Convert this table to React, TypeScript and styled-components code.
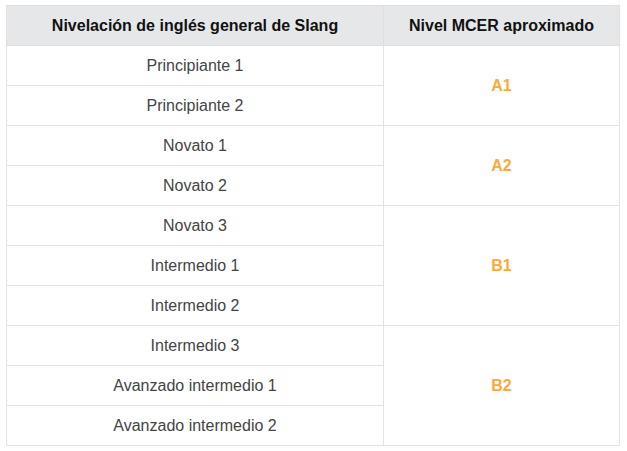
import React from "react";
import styled, { createGlobalStyle } from "styled-components";

const GlobalStyle = createGlobalStyle`
  html, body {
    margin: 0;
    padding: 0;
    background: #ffffff;
  }
  body {
    font-family: "Liberation Sans", Arial, sans-serif;
  }
`;

const Wrapper = styled.div`
  padding: 5px 10px 0 6px;
`;

const Table = styled.table`
  width: 611px;
  border-collapse: collapse;
  table-layout: fixed;
`;

const HeadCell = styled.th<{ $w: number }>`
  width: ${(p) => p.$w}px;
  height: 39px;
  padding: 0;
  background: #e6e7e9;
  border: 1px solid #dfdfdf;
  color: #111111;
  font-size: 16px;
  font-weight: 700;
  text-align: center;
  vertical-align: middle;
`;

const Cell = styled.td`
  height: 39px;
  padding: 0;
  border: 1px solid #e3e3e3;
  color: #444444;
  font-size: 16px;
  text-align: center;
  vertical-align: middle;
`;

const LevelCell = styled(Cell)`
  color: #fbaa3a;
  font-weight: 700;
`;

const groups = [
  { level: "A1", rows: ["Principiante 1", "Principiante 2"] },
  { level: "A2", rows: ["Novato 1", "Novato 2"] },
  { level: "B1", rows: ["Novato 3", "Intermedio 1", "Intermedio 2"] },
  { level: "B2", rows: ["Intermedio 3", "Avanzado intermedio 1", "Avanzado intermedio 2"] },
];

const App = (): JSX.Element => {
  return (
    <>
      <GlobalStyle />
      <Wrapper>
        <Table>
          <thead>
            <tr>
              <HeadCell $w={376}>Nivelación de inglés general de Slang</HeadCell>
              <HeadCell $w={235}>Nivel MCER aproximado</HeadCell>
            </tr>
          </thead>
          <tbody>
            {groups.map((g) =>
              g.rows.map((r, i) => (
                <tr key={r}>
                  <Cell>{r}</Cell>
                  {i === 0 && <LevelCell rowSpan={g.rows.length}>{g.level}</LevelCell>}
                </tr>
              ))
            )}
          </tbody>
        </Table>
      </Wrapper>
    </>
  );
};

export default App;
